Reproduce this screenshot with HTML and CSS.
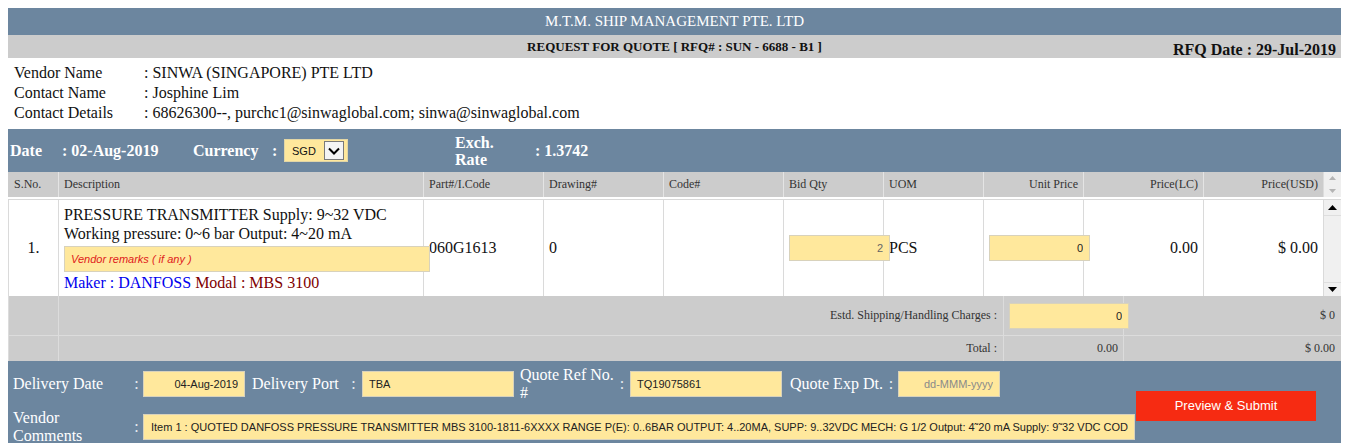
FILE: index.html
```html
<!DOCTYPE html>
<html>
<head>
<meta charset="utf-8">
<title>Request For Quote</title>
<link rel="stylesheet" href="styles.css">
</head>
<body>
<div class="page">
  <div class="title-bar">M.T.M. SHIP MANAGEMENT PTE. LTD</div>
  <div class="sub-bar">
    <span class="rfq-title">REQUEST FOR QUOTE [ RFQ# : SUN - 6688 - B1 ]</span>
    <span class="rfq-date">RFQ Date : 29-Jul-2019</span>
  </div>

  <div class="vendor">
    <span>Vendor Name</span><span>: SINWA (SINGAPORE) PTE LTD</span>
    <span>Contact Name</span><span>: Josphine Lim</span>
    <span>Contact Details</span><span>: 68626300--, purchc1@sinwaglobal.com; sinwa@sinwaglobal.com</span>
  </div>

  <div class="band">
    <span class="b-date">Date</span>
    <span class="b-dateval">: 02-Aug-2019</span>
    <span class="b-cur">Currency</span>
    <span class="b-colon">:</span>
    <div class="select">
      <span>SGD</span>
      <span class="select-arrow"><svg width="12" height="8" viewBox="0 0 12 8"><path d="M1 1.5 L6 6.5 L11 1.5" fill="none" stroke="#000" stroke-width="2"/></svg></span>
    </div>
    <span class="b-exch">Exch.<br>Rate</span>
    <span class="b-rate">: 1.3742</span>
  </div>

  <div class="cols grid-head">
    <div class="hc">S.No.</div>
    <div class="hc">Description</div>
    <div class="hc">Part#/I.Code</div>
    <div class="hc">Drawing#</div>
    <div class="hc">Code#</div>
    <div class="hc">Bid Qty</div>
    <div class="hc">UOM</div>
    <div class="hc r">Unit Price</div>
    <div class="hc r">Price(LC)</div>
    <div class="hc r">Price(USD)</div>
    <div class="hscroll">
      <span class="hs-btn"><svg width="7" height="4" viewBox="0 0 7 4"><path d="M0 4 L3.5 0 L7 4Z" fill="#b4b4b4"/></svg></span>
      <span class="hs-btn"><svg width="7" height="4" viewBox="0 0 7 4"><path d="M0 0 L3.5 4 L7 0Z" fill="#b4b4b4"/></svg></span>
    </div>
  </div>

  <div class="cols grid-row">
    <div class="dc c">1.</div>
    <div class="dc desc">
      <div>PRESSURE TRANSMITTER Supply: 9~32 VDC</div>
      <div>Working pressure: 0~6 bar Output: 4~20 mA</div>
      <input class="fld remarks" type="text" placeholder="Vendor remarks ( if any )">
      <div><span class="maker">Maker : DANFOSS</span> <span class="model">Modal : MBS 3100</span></div>
    </div>
    <div class="dc">060G1613</div>
    <div class="dc">0</div>
    <div class="dc"></div>
    <div class="dc"><input class="fld num qty" type="text" value="2"></div>
    <div class="dc">PCS</div>
    <div class="dc"><input class="fld num price" type="text" value="0"></div>
    <div class="dc r">0.00</div>
    <div class="dc r">$ 0.00</div>
    <div class="vscroll">
      <span class="vs-up"><svg width="9" height="5" viewBox="0 0 9 5"><path d="M0 5 L4.5 0 L9 5Z" fill="#000"/></svg></span>
      <span class="vs-track"></span>
      <span class="vs-down"><svg width="9" height="5" viewBox="0 0 9 5"><path d="M0 0 L4.5 5 L9 0Z" fill="#000"/></svg></span>
    </div>
  </div>

  <div class="totals">
    <div></div>
    <div>Estd. Shipping/Handling Charges :</div>
    <div class="t-in"><input class="fld num ship" type="text" value="0"></div>
    <div>$ 0</div>
    <div></div>
    <div>Total :</div>
    <div class="t-lc">0.00</div>
    <div>$ 0.00</div>
  </div>

  <div class="footer">
    <div class="fl">Delivery Date</div>
    <div class="fc">:</div>
    <div><input class="fld num w102" type="text" value="04-Aug-2019"></div>
    <div class="fl">Delivery Port</div>
    <div class="fc">:</div>
    <div><input class="fld w152" type="text" value="TBA"></div>
    <div class="fl">Quote Ref No.<br>#</div>
    <div class="fc">:</div>
    <div><input class="fld w152" type="text" value="TQ19075861"></div>
    <div class="fl">Quote Exp Dt.</div>
    <div class="fc">:</div>
    <div><input class="fld num w102" type="text" placeholder="dd-MMM-yyyy"></div>
    <button class="submit" type="button">Preview &amp; Submit</button>
    <div class="fl">Vendor<br>Comments</div>
    <div class="fc">:</div>
    <input class="fld comments" type="text" value="Item 1 : QUOTED DANFOSS PRESSURE TRANSMITTER MBS 3100-1811-6XXXX RANGE P(E): 0..6BAR OUTPUT: 4..20MA, SUPP: 9..32VDC MECH: G 1/2 Output: 4˜20 mA Supply: 9˜32 VDC CODE: 060G1613">
  </div>
</div>
</body>
</html>
```

FILE: styles.css
```css
* { box-sizing: border-box; }
html, body { overflow: hidden; }
body {
  margin: 8px;
  background: #fff;
  font-family: "Liberation Serif", "Times New Roman", serif;
  color: #111;
}
.page { width: 1333px; }

.title-bar {
  height: 27px;
  line-height: 27px;
  background: #6c869f;
  color: #fff;
  font-size: 15px;
  text-align: center;
}
.sub-bar {
  height: 23px;
  background: #ccc;
  display: grid;
  grid-template-columns: 1fr auto 1fr;
  align-items: center;
}
.rfq-title { grid-column: 2; font-size: 13px; font-weight: bold; }
.rfq-date {
  grid-column: 3;
  justify-self: end;
  align-self: end;
  font-size: 16px;
  line-height: 16px;
  font-weight: bold;
  padding-right: 5px;
}

.vendor {
  height: 71px;
  padding: 5px 0 0 6px;
  display: grid;
  grid-template-columns: 130px 1fr;
  align-content: start;
  font-size: 16px;
  line-height: 20px;
}

.band {
  height: 43px;
  background: #6c869f;
  color: #fff;
  font-size: 16px;
  font-weight: bold;
  display: flex;
  align-items: center;
  padding-left: 2px;
}
.b-date { width: 52px; }
.b-dateval { width: 131px; }
.b-cur { width: 79px; }
.b-colon { width: 12px; }
.select {
  width: 64px;
  height: 23px;
  margin-right: 107px;
  background: #ffe89c;
  border: 1px solid #e2d6a6;
  display: flex;
  align-items: center;
  justify-content: space-between;
  padding: 0 3px 0 7px;
  font: 11px "Liberation Sans", Arial, sans-serif;
  color: #111;
}
.select-arrow {
  width: 20px;
  height: 19px;
  background: #f4f4f4;
  border: 1px solid #7a7a7a;
  display: flex;
  align-items: center;
  justify-content: center;
}
.b-exch { width: 80px; line-height: 17px; }

.cols {
  display: grid;
  grid-template-columns: 50px 365px 120px 120px 120px 100px 100px 100px 120px 120px 18px;
}
.grid-head {
  height: 25px;
  background: #ccc;
  font-size: 12px;
  color: #333;
}
.hc {
  display: flex;
  align-items: center;
  padding: 0 5px;
  border-left: 1px solid #e4e4e4;
}
.hc:first-child { border-left-color: #ccc; }
.hc.r { justify-content: flex-end; }
.hscroll {
  background: #efefef;
  border-left: 1px solid #dcdcdc;
  display: flex;
  flex-direction: column;
}
.hs-btn {
  flex: 1;
  display: flex;
  align-items: center;
  justify-content: center;
}

.grid-row {
  height: 97px;
  margin-top: 2px;
  border-top: 1px solid #d8d8d8;
  background: #fff;
  font-size: 16px;
  color: #111;
}
.dc {
  display: flex;
  align-items: center;
  padding: 0 5px;
  border-left: 1px solid #dadada;
}
.dc.c { justify-content: center; }
.dc.r { justify-content: flex-end; }
.desc {
  flex-direction: column;
  align-items: flex-start;
  justify-content: center;
  line-height: 19px;
}
.maker { color: #0000ee; }
.model { color: #7f0000; }

.fld {
  position: relative;
  z-index: 1;
  height: 26px;
  margin: 0;
  padding: 0 6px;
  background: #ffe89c;
  border: 1px solid #d8d2bc;
  font: 11px "Liberation Sans", Arial, sans-serif;
  color: #222;
  outline: none;
}
.fld.num { text-align: right; }
.fld::placeholder { color: #8a8a8a; }
.remarks { width: 366px; margin: 3px 0 1px; }
.remarks::placeholder { color: #e0201a; font-style: italic; }
.qty { width: 101px; color: #666; }
.price { width: 101px; }

.vscroll {
  background: #f0f0f0;
  border-left: 1px solid #dadada;
  display: flex;
  flex-direction: column;
}
.vs-up, .vs-down {
  display: flex;
  align-items: center;
  justify-content: center;
}
.vs-up { height: 16px; border-bottom: 1px solid #dedede; }
.vs-track { flex: 1; }
.vs-down { height: 14px; border-top: 1px solid #dedede; }

.totals {
  display: grid;
  grid-template-columns: 50px 945px 120px 218px;
  grid-template-rows: 40px 25px;
  background: #ccc;
  font-size: 12px;
  color: #333;
}
.totals > div {
  display: flex;
  align-items: center;
  justify-content: flex-end;
  padding: 0 6px 0 5px;
  border-left: 1px solid #dcdcdc;
}
.totals > div:nth-child(-n+4) { border-bottom: 1px solid #dcdcdc; }
.totals > .t-in { justify-content: flex-start; }
.totals > .t-lc { padding-right: 5px; }
.ship { width: 120px; }

.footer {
  height: 90px;
  padding-top: 5px;
  background: #6c869f;
  color: #fff;
  font-size: 16px;
  line-height: 18px;
  display: grid;
  grid-template-columns: 122px 13px 105px 97px 17px 154px 98px 16px 156px 98px 14px 107px 1fr;
  grid-template-rows: 36px 36px;
  row-gap: 7px;
  align-items: center;
}
.fl { padding-left: 5px; }
.fl:nth-child(4), .fl:nth-child(7), .fl:nth-child(10) { padding-left: 4px; }
.fc { text-align: center; color: #e8edf2; }
.w102 { width: 102px; }
.w152 { width: 152px; }
.comments {
  grid-column: 3 / 13;
  width: 992px;
  padding-left: 7px;
}
.submit {
  grid-column: 13;
  grid-row: 1 / 3;
  justify-self: end;
  margin-right: 25px;
  width: 180px;
  height: 30px;
  border: 0;
  background: #f62b12;
  color: #fff;
  font: 13px "Liberation Sans", Arial, sans-serif;
}
```
